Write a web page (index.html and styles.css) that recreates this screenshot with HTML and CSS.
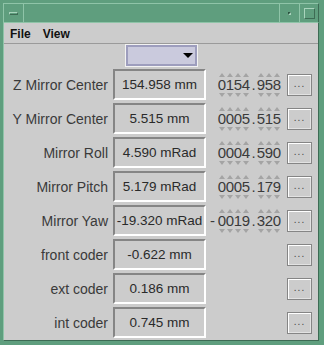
FILE: index.html
```html
<!DOCTYPE html>
<html lang="en">
<head>
    <meta charset="UTF-8">
    <title>Mirror Control</title>
    <link rel="stylesheet" href="styles.css">
</head>
<body>

<div class="window">
    <!-- window manager title bar -->
    <div class="titlebar">
        <div class="tb-btn tb-menu"><span class="ico-dash"></span></div>
        <div class="tb-title"></div>
        <div class="tb-btn tb-min"><span class="ico-dot"></span></div>
        <div class="tb-btn tb-max"><span class="ico-square"></span></div>
    </div>

    <div class="client">
        <div class="menubar">
            <span class="menu-item">File</span>
            <span class="menu-item">View</span>
        </div>

        <div class="panel">
            <div class="combo"><div class="combo-inner"><span class="combo-arrow"></span></div></div>

            <div class="rows">
                <div class="row">
                    <div class="label">Z Mirror Center</div>
                    <div class="value">154.958 mm</div>
                    <div class="spinner">
                        <span class="sign"></span>
                        <span class="d">0</span><span class="d">1</span><span class="d">5</span><span class="d">4</span>
                        <span class="dot">.</span>
                        <span class="d">9</span><span class="d">5</span><span class="d">8</span>
                    </div>
                    <button class="more">...</button>
                </div>
                <div class="row">
                    <div class="label">Y Mirror Center</div>
                    <div class="value">5.515 mm</div>
                    <div class="spinner">
                        <span class="sign"></span>
                        <span class="d">0</span><span class="d">0</span><span class="d">0</span><span class="d">5</span>
                        <span class="dot">.</span>
                        <span class="d">5</span><span class="d">1</span><span class="d">5</span>
                    </div>
                    <button class="more">...</button>
                </div>
                <div class="row">
                    <div class="label">Mirror Roll</div>
                    <div class="value">4.590 mRad</div>
                    <div class="spinner">
                        <span class="sign"></span>
                        <span class="d">0</span><span class="d">0</span><span class="d">0</span><span class="d">4</span>
                        <span class="dot">.</span>
                        <span class="d">5</span><span class="d">9</span><span class="d">0</span>
                    </div>
                    <button class="more">...</button>
                </div>
                <div class="row">
                    <div class="label">Mirror Pitch</div>
                    <div class="value">5.179 mRad</div>
                    <div class="spinner">
                        <span class="sign"></span>
                        <span class="d">0</span><span class="d">0</span><span class="d">0</span><span class="d">5</span>
                        <span class="dot">.</span>
                        <span class="d">1</span><span class="d">7</span><span class="d">9</span>
                    </div>
                    <button class="more">...</button>
                </div>
                <div class="row">
                    <div class="label">Mirror Yaw</div>
                    <div class="value">-19.320 mRad</div>
                    <div class="spinner">
                        <span class="sign">-</span>
                        <span class="d">0</span><span class="d">0</span><span class="d">1</span><span class="d">9</span>
                        <span class="dot">.</span>
                        <span class="d">3</span><span class="d">2</span><span class="d">0</span>
                    </div>
                    <button class="more">...</button>
                </div>
                <div class="row">
                    <div class="label">front coder</div>
                    <div class="value">-0.622 mm</div>
                    <div class="spinner"></div>
                    <button class="more">...</button>
                </div>
                <div class="row">
                    <div class="label">ext coder</div>
                    <div class="value">0.186 mm</div>
                    <div class="spinner"></div>
                    <button class="more">...</button>
                </div>
                <div class="row">
                    <div class="label">int coder</div>
                    <div class="value">0.745 mm</div>
                    <div class="spinner"></div>
                    <button class="more">...</button>
                </div>
            </div>
        </div>
    </div>
</div>

</body>
</html>
```

FILE: styles.css
```css
body {
    margin: 0;
    background-color: #5f9e7e;
    font-family: "Liberation Sans", Arial, sans-serif;
}
.window {
    width: 324px;
    height: 345px;
    box-sizing: border-box;
    padding: 3px 5px 4px 3px;
    display: flex;
    flex-direction: column;
}

/* title bar */
.titlebar {
    height: 20px;
    box-sizing: border-box;
    display: flex;
    border-top: 1px solid #8fc4a8;
    border-left: 1px solid #8fc4a8;
    border-right: 1px solid #3d6b54;
    border-bottom: 1px solid #8fc4a8;
}
.tb-btn {
    width: 19px;
    display: flex;
    align-items: center;
    justify-content: center;
}
.tb-menu {
    border-right: 1px solid #8fc4a8;
}
.tb-title {
    flex: 1;
}
.tb-min {
    border-left: 1px solid #8fc4a8;
    border-right: 1px solid #8fc4a8;
}
.tb-max {
    width: 18px;
}
.ico-dash {
    width: 7px;
    height: 1px;
    border: 1px solid #a9d4bd;
    border-bottom-color: #3d6b54;
    border-right-color: #3d6b54;
}
.ico-dot {
    width: 1px;
    height: 1px;
    border: 1px solid #2f5442;
    border-bottom-color: #a9d4bd;
    border-right-color: #a9d4bd;
}
.ico-square {
    width: 9px;
    height: 9px;
    border: 1px solid #a9d4bd;
    border-bottom-color: #3d6b54;
    border-right-color: #3d6b54;
}

/* client area */
.client {
    flex: 1;
    background-color: #cccccc;
    border-left: 1px solid #8fc4a8;
    border-right: 1px solid #3d6b54;
    border-bottom: 1px solid #3d6b54;
    display: flex;
    flex-direction: column;
}
.menubar {
    height: 20px;
    border-bottom: 1px solid #9a9a9a;
    display: flex;
    align-items: center;
    padding-left: 6px;
    gap: 12px;
}
.menu-item {
    font-size: 12px;
    font-weight: bold;
    color: #111;
    padding-top: 1px;
}
.panel {
    display: flex;
    flex-direction: column;
}
.combo {
    width: 73px;
    height: 23px;
    box-sizing: border-box;
    margin: 0 auto;
    border: 1px solid #f2f2f2;
}
.combo-inner {
    height: 100%;
    box-sizing: border-box;
    border: 2px solid #9d9dbd;
    background-color: #cacadd;
    display: flex;
    align-items: center;
    justify-content: flex-end;
    padding-right: 2px;
}
.combo-arrow {
    width: 0;
    height: 0;
    border-left: 5px solid transparent;
    border-right: 5px solid transparent;
    border-top: 5px solid #000;
}

/* rows */
.rows {
    margin-top: 2px;
    display: flex;
    flex-direction: column;
    gap: 3px;
}
.row {
    height: 31px;
    display: flex;
    align-items: center;
}
.label {
    width: 104px;
    text-align: right;
    font-size: 14px;
    color: #3a3a3a;
}
.value {
    width: 93px;
    height: 31px;
    box-sizing: border-box;
    margin-left: 5px;
    border: 2px solid;
    border-color: #858585 #ffffff #ffffff #858585;
    font-size: 13.5px;
    color: #2a2a2a;
    display: flex;
    align-items: center;
    justify-content: center;
    white-space: nowrap;
    overflow: hidden;
}
.spinner {
    width: 81px;
    box-sizing: border-box;
    padding-left: 4px;
    display: flex;
    align-items: center;
    font-size: 15px;
    color: #3a3a3a;
}
.sign {
    width: 8px;
    text-align: left;
    line-height: 14px;
}
.d {
    width: 8px;
    display: flex;
    flex-direction: column;
    align-items: center;
    line-height: 14px;
}
.d::before,
.d::after {
    content: "";
    width: 0;
    height: 0;
    border-left: 3px solid transparent;
    border-right: 3px solid transparent;
}
.d::before {
    border-bottom: 4px solid #a4a4a4;
    margin-bottom: 1px;
}
.d::after {
    border-top: 4px solid #a4a4a4;
    margin-top: 1px;
}
.dot {
    width: 7px;
    text-align: center;
    line-height: 14px;
}
.more {
    width: 25px;
    height: 22px;
    padding: 0 0 2px 0;
    background-color: #cccccc;
    border: 1px solid #858585;
    box-shadow: inset 1px 1px 0 #ffffff, inset -1px -1px 0 #e2e2e2;
    font-family: "Liberation Sans", Arial, sans-serif;
    font-size: 10px;
    color: #444;
    letter-spacing: 1px;
}
```
